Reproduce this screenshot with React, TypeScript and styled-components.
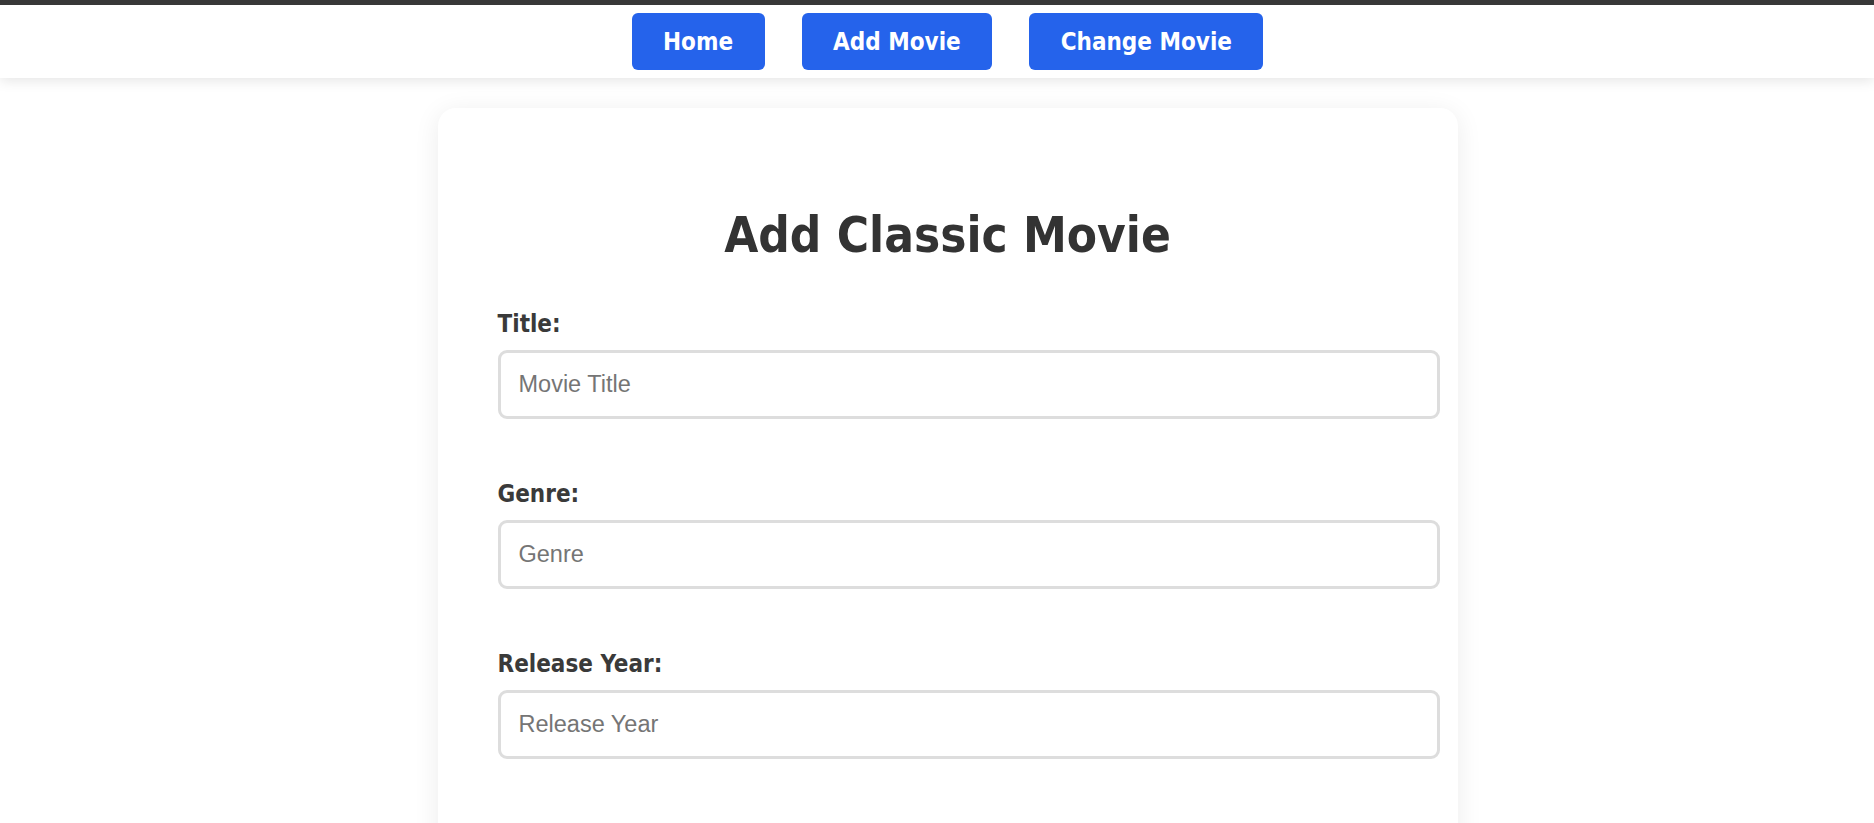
import React from "react";
import styled, { createGlobalStyle } from "styled-components";

const GlobalStyle = createGlobalStyle`
  html, body {
    margin: 0;
    padding: 0;
    background: #ffffff;
  }
  body {
    font-family: "DejaVu Sans Condensed", "DejaVu Sans", sans-serif;
    color: #333333;
  }
`;

const Page = styled.div`
  min-height: 100vh;
  display: flex;
  flex-direction: column;
`;

const NavBar = styled.nav`
  background: #ffffff;
  border-top: 5px solid #383838;
  box-shadow: 0 3px 12px rgba(0, 0, 0, 0.1);
  padding: 8px 0 8px 21px;
  position: relative;
  z-index: 1;
`;

const NavList = styled.div`
  display: flex;
  justify-content: center;
  gap: 37px;
`;

const NavButton = styled.button`
  height: 57px;
  padding: 0 31.5px;
  border: none;
  border-radius: 6px;
  background: #2563eb;
  color: #ffffff;
  font-family: "DejaVu Sans Condensed", "DejaVu Sans", sans-serif;
  font-weight: 700;
  font-size: 24px;
  cursor: pointer;
`;

const Main = styled.main`
  display: flex;
  justify-content: center;
  padding: 30px 0 0 21px;
`;

const Card = styled.section`
  width: 900px;
  padding: 60px 60px 80px;
  background: #ffffff;
  border-radius: 18px;
  box-shadow: 0 4px 26px rgba(0, 0, 0, 0.08);
`;

const Heading = styled.h1`
  margin: 38.5px 0 46px;
  text-align: center;
  font-size: 49px;
  font-weight: 700;
  line-height: normal;
  color: #333333;
`;

const Field = styled.div`
  margin-bottom: 60.5px;
`;

const Label = styled.label`
  display: block;
  margin-bottom: 12.5px;
  font-size: 24px;
  font-weight: 700;
  line-height: normal;
  color: #3a3a3a;
`;

const Input = styled.input`
  display: block;
  width: 100%;
  box-sizing: content-box;
  padding: 18px;
  border: 3px solid #dddddd;
  border-radius: 9px;
  font-family: "Liberation Sans", Arial, sans-serif;
  font-size: 23.5px;
  line-height: 27px;
  height: 27px;
  color: #333333;
  background: #ffffff;
  outline: none;

  &::placeholder {
    color: #757575;
  }
`;

const fields = [
  { id: "title", label: "Title:", placeholder: "Movie Title" },
  { id: "genre", label: "Genre:", placeholder: "Genre" },
  { id: "year", label: "Release Year:", placeholder: "Release Year" },
];

export default function App() {
  return (
    <Page>
      <GlobalStyle />
      <NavBar>
        <NavList>
          <NavButton>Home</NavButton>
          <NavButton>Add Movie</NavButton>
          <NavButton>Change Movie</NavButton>
        </NavList>
      </NavBar>
      <Main>
        <Card>
          <Heading>Add Classic Movie</Heading>
          {fields.map((f) => (
            <Field key={f.id}>
              <Label htmlFor={f.id}>{f.label}</Label>
              <Input id={f.id} type="text" placeholder={f.placeholder} />
            </Field>
          ))}
        </Card>
      </Main>
    </Page>
  );
}
